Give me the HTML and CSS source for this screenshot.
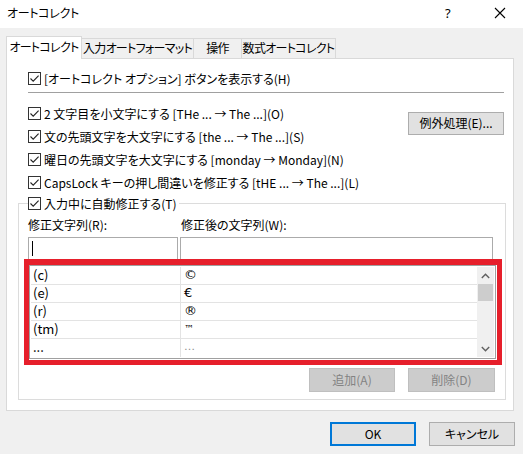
FILE: index.html
```html
<!DOCTYPE html>
<html lang="ja">
<head>
<meta charset="utf-8">
<title>オートコレクト</title>
<link rel="stylesheet" href="styles.css">
</head>
<body>
<div class="dialog">
  <div class="titlebar">
    <span class="title">オートコレクト</span>
    <span class="help">?</span>
    <svg class="close" width="12" height="12" viewBox="0 0 12 12"><path d="M1 1 L11 11 M11 1 L1 11" stroke="#000" stroke-width="1.1" fill="none"/></svg>
  </div>

  <div class="tabs">
    <div class="tab active">オートコレクト</div>
    <div class="tab t2">入力オートフォーマット</div>
    <div class="tab t3">操作</div>
    <div class="tab t4">数式オートコレクト</div>
  </div>

  <div class="panel">
    <div class="row">
      <span class="cb"><svg width="13" height="13" viewBox="0 0 13 13"><rect x="0.5" y="0.5" width="12" height="12" fill="#fff" stroke="#333"/><path d="M2.5 6.5 L5.2 9.2 L10.6 3.6" stroke="#222" stroke-width="1.1" fill="none"/></svg></span>
      <span>[オートコレクト オプション] ボタンを表示する(H)</span>
    </div>
    <div class="sep"></div>
    <div class="opts">
      <div class="optcol">
        <div class="row">
          <span class="cb"><svg width="13" height="13" viewBox="0 0 13 13"><rect x="0.5" y="0.5" width="12" height="12" fill="#fff" stroke="#333"/><path d="M2.5 6.5 L5.2 9.2 L10.6 3.6" stroke="#222" stroke-width="1.1" fill="none"/></svg></span>
          <span>2 文字目を小文字にする [THe ... → The ...](O)</span>
        </div>
        <div class="row">
          <span class="cb"><svg width="13" height="13" viewBox="0 0 13 13"><rect x="0.5" y="0.5" width="12" height="12" fill="#fff" stroke="#333"/><path d="M2.5 6.5 L5.2 9.2 L10.6 3.6" stroke="#222" stroke-width="1.1" fill="none"/></svg></span>
          <span>文の先頭文字を大文字にする [the ... → The ...](S)</span>
        </div>
        <div class="row">
          <span class="cb"><svg width="13" height="13" viewBox="0 0 13 13"><rect x="0.5" y="0.5" width="12" height="12" fill="#fff" stroke="#333"/><path d="M2.5 6.5 L5.2 9.2 L10.6 3.6" stroke="#222" stroke-width="1.1" fill="none"/></svg></span>
          <span>曜日の先頭文字を大文字にする [monday → Monday](N)</span>
        </div>
        <div class="row">
          <span class="cb"><svg width="13" height="13" viewBox="0 0 13 13"><rect x="0.5" y="0.5" width="12" height="12" fill="#fff" stroke="#333"/><path d="M2.5 6.5 L5.2 9.2 L10.6 3.6" stroke="#222" stroke-width="1.1" fill="none"/></svg></span>
          <span>CapsLock キーの押し間違いを修正する [tHE ... → The ...](L)</span>
        </div>
      </div>
      <button class="btn exc">例外処理(E)...</button>
    </div>

    <fieldset class="group">
      <legend class="legend">
        <span class="cb"><svg width="13" height="13" viewBox="0 0 13 13"><rect x="0.5" y="0.5" width="12" height="12" fill="#fff" stroke="#333"/><path d="M2.5 6.5 L5.2 9.2 L10.6 3.6" stroke="#222" stroke-width="1.1" fill="none"/></svg></span>
        <span>入力中に自動修正する(T)</span>
      </legend>
      <div class="labels">
        <span class="lab1">修正文字列(R):</span>
        <span class="lab2">修正後の文字列(W):</span>
      </div>
      <div class="inputs">
        <div class="inp i1"><span class="caret"></span></div>
        <div class="inp i2"></div>
      </div>
      <div class="listwrap">
        <div class="list">
          <div class="rows">
            <div class="lr"><span class="c1">(c)</span><span class="c2">©</span></div>
            <div class="lr"><span class="c1">(e)</span><span class="c2">€</span></div>
            <div class="lr"><span class="c1">(r)</span><span class="c2">®</span></div>
            <div class="lr"><span class="c1">(tm)</span><span class="c2 tm">™</span></div>
            <div class="lr"><span class="c1">...</span><span class="c2 ell">…</span></div>
          </div>
          <div class="sbar">
            <div class="sarrow"><svg width="9" height="6" viewBox="0 0 9 6"><path d="M0.8 5 L4.5 1.3 L8.2 5" stroke="#606060" stroke-width="1.4" fill="none"/></svg></div>
            <div class="thumb"></div>
            <div class="track"></div>
            <div class="sarrow"><svg width="9" height="6" viewBox="0 0 9 6"><path d="M0.8 1 L4.5 4.7 L8.2 1" stroke="#606060" stroke-width="1.4" fill="none"/></svg></div>
          </div>
        </div>
        <div class="redframe"></div>
      </div>
      <div class="gbtns">
        <button class="btn dis">追加(A)</button>
        <button class="btn dis">削除(D)</button>
      </div>
    </fieldset>
  </div>

  <div class="footer">
    <button class="btn ok">OK</button>
    <button class="btn">キャンセル</button>
  </div>
</div>
</body>
</html>
```

FILE: styles.css
```css
* { box-sizing: border-box; }
html, body { margin: 0; padding: 0; }
body {
  width: 523px;
  height: 454px;
  background: #f0f0f0;
  font-family: "Noto Sans CJK JP", "Noto Sans", sans-serif;
  font-size: 12px;
  font-feature-settings: "palt";
  color: #000;
  overflow: hidden;
}
.dialog { width: 523px; height: 454px; display: flex; flex-direction: column; }

.titlebar {
  height: 28px;
  background: #fff;
  display: flex;
  align-items: center;
  padding: 0 0 0 7px;
  flex: none;
}
.title { flex: 1; line-height: 16px; padding-bottom: 2px; letter-spacing: -0.3px; }
.help { width: 12px; margin-right: 37px; font-family: "Noto Sans", sans-serif; font-size: 13px; line-height: 16px; padding-bottom: 2px; }
.close { margin-right: 17px; margin-bottom: 2px; }

.tabs {
  margin: 8px 0 0 6px;
  height: 22px;
  display: flex;
  align-items: flex-end;
  position: relative;
  z-index: 1;
  flex: none;
}
.tab {
  height: 20px;
  border: 1px solid #d9d9d9;
  border-bottom: none;
  background: #f0f0f0;
  text-align: center;
  line-height: 18px;
  margin-left: -1px;
  white-space: nowrap;
  letter-spacing: -0.7px;
}
.tab.active {
  width: 76px;
  height: 23px;
  margin-left: 0;
  margin-bottom: -1px;
  background: #fff;
  line-height: 20px;
  padding-bottom: 2px;
}
.tab.t2 { width: 113px; }
.tab.t3 { width: 49px; }
.tab.t4 { width: 95px; }

.panel {
  margin-left: 6px;
  width: 508px;
  height: 353px;
  background: #fff;
  border: 1px solid #d9d9d9;
  padding: 8px 9px 0 21px;
  flex: none;
}
.row {
  height: 23px;
  display: flex;
  align-items: center;
  white-space: nowrap;
  line-height: 16px;
}
.cb { width: 13px; height: 13px; margin-right: 3px; flex: none; display: flex; }
.sep { height: 1px; background: #a0a0a0; margin-top: 2px; }
.opts { margin-top: 9px; display: flex; justify-content: space-between; align-items: flex-start; }
.optcol { display: flex; flex-direction: column; }

.btn {
  font: inherit;
  font-feature-settings: "palt";
  color: #000;
  background: #e1e1e1;
  border: 1px solid #adadad;
  height: 24px;
  width: 86px;
  padding: 0;
  line-height: 18px;
  padding-bottom: 1px;
}
.btn.exc { width: 96px; height: 23px; margin-top: 10px; }
.btn.dis { background: #cccccc; border-color: #bfbfbf; color: #838383; }
.btn.ok { border: 2px solid #0078d7; }

.group {
  margin: -2px -2px 0 -10px;
  padding: 0 10px 7px 9px;
  border: 1px solid #dcdcdc;
  min-width: 0;
}
.legend {
  padding: 0 3px 0 0;
  height: 23px;
  display: flex;
  align-items: center;
  line-height: 16px;
  background: #fff;
}
.labels { margin-top: 2px; height: 16px; display: flex; line-height: 16px; }
.lab1 { width: 153px; }
.inputs { margin-top: 4px; display: flex; gap: 2px; }
.inp { height: 23px; border: 1px solid #ababab; background: #fff; position: relative; }
.i1 { width: 150px; }
.i2 { width: 313px; }
.caret { position: absolute; left: 3px; top: 3px; width: 1px; height: 15px; background: #000; }

.listwrap { margin: 5px -1px 0 1px; position: relative; }
.list {
  height: 94px;
  border: 1px solid #a0a0a0;
  padding: 1px;
  display: flex;
  background: #fff;
}
.rows { flex: 1; display: flex; flex-direction: column; }
.lr {
  height: 18px;
  border-bottom: 1px solid #e3e3e3;
  display: flex;
  line-height: 16px;
  flex: none;
}
.lr:last-child { border-bottom: none; }
.c1 { width: 150px; padding-left: 2px; border-right: 1px solid #e3e3e3; font-size: 13px; }
.c2 { flex: 1; padding-left: 3px; font-family: "DejaVu Sans", sans-serif; font-size: 13px; }
.c2.tm { font-size: 10px; }
.c2.ell { color: #909090; font-size: 11px; }
.sbar { width: 17px; display: flex; flex-direction: column; background: #f0f0f0; }
.sarrow { height: 17px; display: flex; align-items: center; justify-content: center; }
.thumb { height: 17px; background: #cdcdcd; margin: 0 1px; }
.track { flex: 1; }
.redframe {
  position: absolute;
  left: -5px;
  top: -6px;
  right: -6px;
  bottom: -6px;
  border: 5px solid #e61f2b;
  border-top-width: 6px;
  pointer-events: none;
}

.gbtns { margin-top: 9px; display: flex; justify-content: flex-end; gap: 13px; }
.gbtns .btn:last-child { width: 87px; }

.footer {
  margin-top: 11px;
  display: flex;
  justify-content: flex-end;
  gap: 13px;
  padding-right: 8px;
  flex: none;
}
.footer .btn { height: 24px; }
```
